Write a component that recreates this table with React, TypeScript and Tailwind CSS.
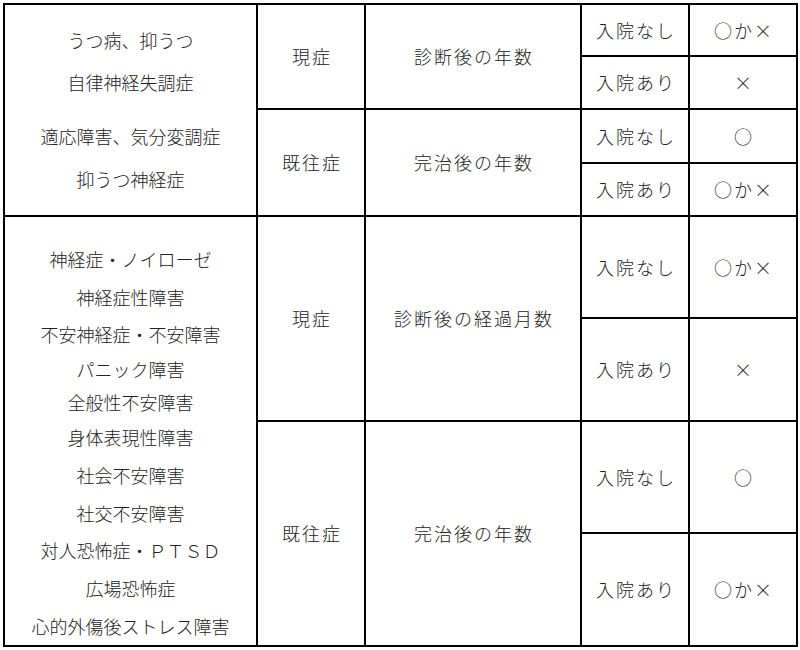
const Cell = ({
  className = "",
  children,
}: {
  className?: string
  children?: React.ReactNode
}) => (
  <div
    className={`flex items-center justify-center bg-white pl-[2px] tracking-[2px] ${className}`}
  >
    {children}
  </div>
)

const topLines = [
  { text: "うつ病、抑うつ", cls: "h-[42px]" },
  { text: "自律神経失調症", cls: "h-[42px]" },
  { text: "適応障害、気分変調症", cls: "h-[44px] mt-[11px]" },
  { text: "抑うつ神経症", cls: "h-[42px]" },
]

const bottomLines = [
  { text: "神経症・ノイローゼ", cls: "h-[38px]" },
  { text: "神経症性障害", cls: "h-[38px]" },
  { text: "不安神経症・不安障害", cls: "h-[36px]" },
  { text: "パニック障害", cls: "h-[34px]" },
  { text: "全般性不安障害", cls: "h-[32px]" },
  { text: "身体表現性障害", cls: "h-[38px]" },
  { text: "社会不安障害", cls: "h-[38px]" },
  { text: "社交不安障害", cls: "h-[38px]" },
  { text: "対人恐怖症・ＰＴＳＤ", cls: "h-[37px]" },
  { text: "広場恐怖症", cls: "h-[38px]" },
  { text: "心的外傷後ストレス障害", cls: "h-[38px]" },
]

export default function App() {
  return (
    <div className="w-[800px] h-[650px] bg-white pl-[3px] pt-[3px]">
      <div
        className="grid w-[795px] bg-black p-[2px] gap-[2px] text-[18px] font-light text-[#222222] grid-cols-[251px_106px_214px_106px_106px] grid-rows-[50px_51px_52px_51px_100px_101px_110px_111px]"
        style={{ fontFamily: '"Noto Sans CJK JP", "Noto Sans", sans-serif' }}
      >
        {/* 上段 */}
        <div className="row-start-1 row-span-4 col-start-1 flex flex-col bg-white pt-[14px]">
          {topLines.map((l) => (
            <div
              key={l.text}
              className={`flex items-center justify-center ${l.cls}`}
            >
              {l.text}
            </div>
          ))}
        </div>
        <Cell className="row-start-1 row-span-2 col-start-2">現症</Cell>
        <Cell className="row-start-1 row-span-2 col-start-3">診断後の年数</Cell>
        <Cell className="row-start-1 col-start-4">入院なし</Cell>
        <Cell className="row-start-1 col-start-5">○か×</Cell>
        <Cell className="row-start-2 col-start-4">入院あり</Cell>
        <Cell className="row-start-2 col-start-5">×</Cell>

        <Cell className="row-start-3 row-span-2 col-start-2">既往症</Cell>
        <Cell className="row-start-3 row-span-2 col-start-3">完治後の年数</Cell>
        <Cell className="row-start-3 col-start-4">入院なし</Cell>
        <Cell className="row-start-3 col-start-5">○</Cell>
        <Cell className="row-start-4 col-start-4">入院あり</Cell>
        <Cell className="row-start-4 col-start-5">○か×</Cell>

        {/* 下段 */}
        <div className="row-start-5 row-span-4 col-start-1 flex flex-col bg-white pt-[24px]">
          {bottomLines.map((l) => (
            <div
              key={l.text}
              className={`flex items-center justify-center ${l.cls}`}
            >
              {l.text}
            </div>
          ))}
        </div>
        <Cell className="row-start-5 row-span-2 col-start-2">現症</Cell>
        <Cell className="row-start-5 row-span-2 col-start-3">診断後の経過月数</Cell>
        <Cell className="row-start-5 col-start-4">入院なし</Cell>
        <Cell className="row-start-5 col-start-5">○か×</Cell>
        <Cell className="row-start-6 col-start-4">入院あり</Cell>
        <Cell className="row-start-6 col-start-5">×</Cell>

        <Cell className="row-start-7 row-span-2 col-start-2">既往症</Cell>
        <Cell className="row-start-7 row-span-2 col-start-3">完治後の年数</Cell>
        <Cell className="row-start-7 col-start-4">入院なし</Cell>
        <Cell className="row-start-7 col-start-5">○</Cell>
        <Cell className="row-start-8 col-start-4">入院あり</Cell>
        <Cell className="row-start-8 col-start-5">○か×</Cell>
      </div>
    </div>
  )
}
